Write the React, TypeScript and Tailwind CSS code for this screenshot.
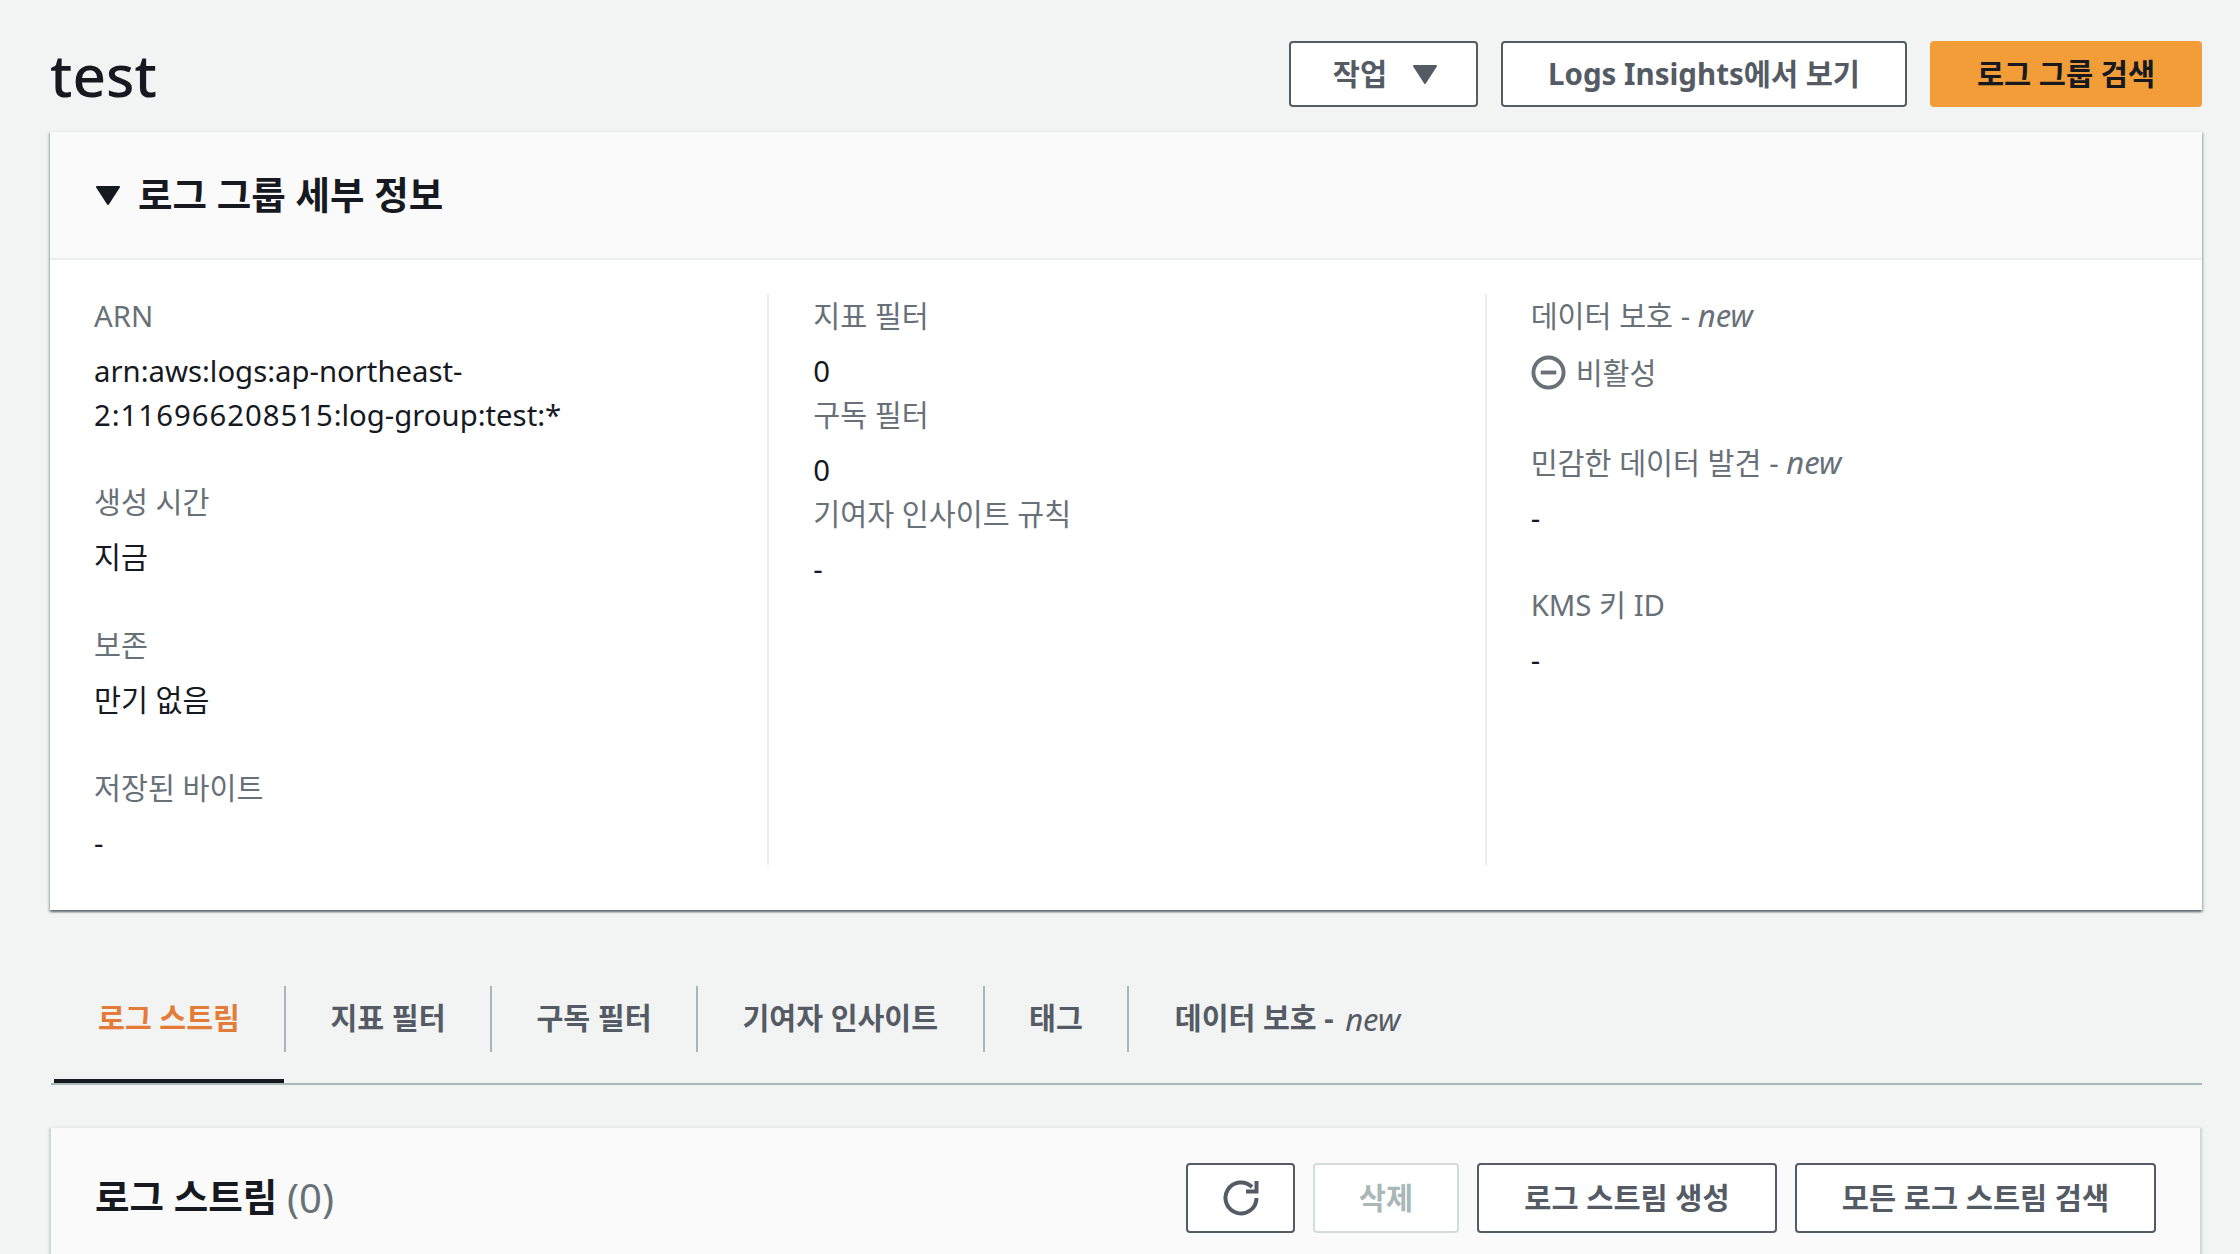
const font = '[font-family:"Noto_Sans","Noto_Sans_CJK_KR",sans-serif]'

function Caret({ className }: { className: string }) {
  return (
    <svg viewBox="0 0 24 20" className={className}>
      <path d="M1 2 H23 L12 19 Z" fill="currentColor" stroke="currentColor" strokeWidth="2" strokeLinejoin="round" />
    </svg>
  )
}

function Button({ children, className = '' }: { children: React.ReactNode; className?: string }) {
  return (
    <button className={`flex items-center justify-center rounded-[4px] border-2 border-[#545b64] bg-white font-bold text-[29.5px] leading-[44px] text-[#545b64] ${className}`}>
      {children}
    </button>
  )
}

function Field({ label, children, className = '' }: { label: React.ReactNode; children: React.ReactNode; className?: string }) {
  return (
    <div className={className}>
      <div className="text-[29.3px] leading-[44px] text-[#687078] mb-[11px]">{label}</div>
      <div className="text-[29.3px] leading-[44px] text-[#16191f]">{children}</div>
    </div>
  )
}

const tabs = ['지표 필터', '구독 필터', '기여자 인사이트', '태그']

export default function App() {
  return (
    <div className={`${font} h-[1254px] overflow-hidden bg-[#f2f3f3] pt-[41px] pl-[50px] pr-[38px]`}>
      <div className="flex items-center justify-between h-[66px] mb-6">
        <h1 className="font-medium text-[58.5px] leading-[66px] text-[#16191f]">test</h1>
        <div className="flex gap-[23px]">
          <Button className="w-[189px] h-[66px] gap-[26px] pl-[3px]">
            작업
            <Caret className="w-[24px] h-[20px]" />
          </Button>
          <Button className="w-[406px] h-[66px]">Logs Insights에서 보기</Button>
          <button className="w-[272px] h-[66px] rounded-[4px] bg-[#f29d38] font-bold text-[29.5px] text-[#16191f]">로그 그룹 검색</button>
        </div>
      </div>

      <section className="bg-white border-t border-[#eaeded] shadow-[0_2px_2px_0_rgba(0,28,36,0.5),2px_2px_2px_0_rgba(0,28,36,0.12),-2px_2px_2px_0_rgba(0,28,36,0.12)]">
        <div className="flex items-center h-[128px] gap-[18px] pl-[46px] bg-[#fafafa] border-b-2 border-[#eaeded]">
          <Caret className="w-[24px] h-[20px] text-[#16191f]" />
          <h2 className="font-bold text-[37.5px] leading-[48px] text-[#16191f]">로그 그룹 세부 정보</h2>
        </div>
        <div className="grid grid-cols-3 pt-[34px] pb-[45px]">
          <div className="pl-[44px] pr-8">
            <Field label="ARN" className="mb-[43px]">arn:aws:logs:ap-northeast-<br /><span className="tracking-[1px]">2:116966208515</span>:log-group:test:*</Field>
            <Field label="생성 시간" className="mb-[44px]">지금</Field>
            <Field label="보존" className="mb-[44px]">만기 없음</Field>
            <Field label="저장된 바이트">-</Field>
          </div>
          <div className="pl-[44px] border-l-2 border-[#eaeded]">
            <Field label="지표 필터">0</Field>
            <Field label="구독 필터">0</Field>
            <Field label="기여자 인사이트 규칙">-</Field>
          </div>
          <div className="pl-[44px] border-l-2 border-[#eaeded]">
            <Field label={<>데이터 보호 - <i className="text-[31px] leading-none">new</i></>} className="mb-[46px]">
              <span className="flex items-center gap-[10px] text-[#687078]">
                <svg viewBox="0 0 36 36" className="w-[35px] h-[35px]">
                  <circle cx="18" cy="18" r="15.5" fill="none" stroke="#687078" strokeWidth="4" />
                  <path d="M10 18 H26" stroke="#687078" strokeWidth="4" />
                </svg>
                <span className="mt-[2px]">비활성</span>
              </span>
            </Field>
            <Field label={<>민감한 데이터 발견 - <i className="text-[31px] leading-none">new</i></>} className="mb-[43px]">-</Field>
            <Field label="KMS 키 ID">-</Field>
          </div>
        </div>
      </section>

      <nav className="mt-[52px] ml-px flex h-[123px] border-b-2 border-[#aab7b8]">
        <div className="flex h-[121px] w-[230px] ml-[3px] justify-center pt-[24px] border-b-4 border-[#16191f]">
          <span className="h-[66px] flex items-center font-bold text-[29.2px] text-[#e47b36]">로그 스트림</span>
        </div>
        {tabs.map((tab) => (
          <div key={tab} className="pt-[24px]">
            <span className="h-[66px] flex items-center px-[44.5px] border-l-2 border-[#aab7b8] font-bold text-[29.2px] text-[#545b64]">{tab}</span>
          </div>
        ))}
        <div className="pt-[24px]">
          <span className="h-[66px] flex items-center pl-[45.5px] border-l-2 border-[#aab7b8] font-bold text-[29.2px] text-[#545b64] whitespace-pre">데이터 보호 - <i className="font-normal text-[31px] leading-none ml-[4px]">new</i></span>
        </div>
      </nav>

      <section className="mt-[41px] ml-px mr-[2px] h-[200px] bg-[#fafafa] border-t-2 border-[#eaeded] shadow-[2px_2px_2px_0_rgba(0,28,36,0.15),-2px_2px_2px_0_rgba(0,28,36,0.15)] flex items-start justify-between pl-[44px] pr-[44px] pt-[35px]">
        <h2 className="h-[69px] flex items-center font-bold text-[37.5px] text-[#16191f] whitespace-pre">로그 스트림 <span className="font-normal text-[40px] text-[#687078]">(0)</span></h2>
        <div className="flex gap-[18px]">
          <Button className="w-[109px] h-[70px]">
            <svg viewBox="0 0 36 36" className="w-[36px] h-[36px]" fill="none" stroke="#545b64" strokeWidth="4">
              <path d="M33.5 18 A15.5 15.5 0 1 1 29 7" />
              <path d="M33.5 1 V11.5 H23" />
            </svg>
          </Button>
          <button className="w-[146px] h-[70px] rounded-[4px] border-2 border-[#d5dbdb] bg-white font-bold text-[29.5px] text-[#aab7b8]">삭제</button>
          <Button className="w-[300px] h-[70px]">로그 스트림 생성</Button>
          <Button className="w-[361px] h-[70px]">모든 로그 스트림 검색</Button>
        </div>
      </section>
    </div>
  )
}
